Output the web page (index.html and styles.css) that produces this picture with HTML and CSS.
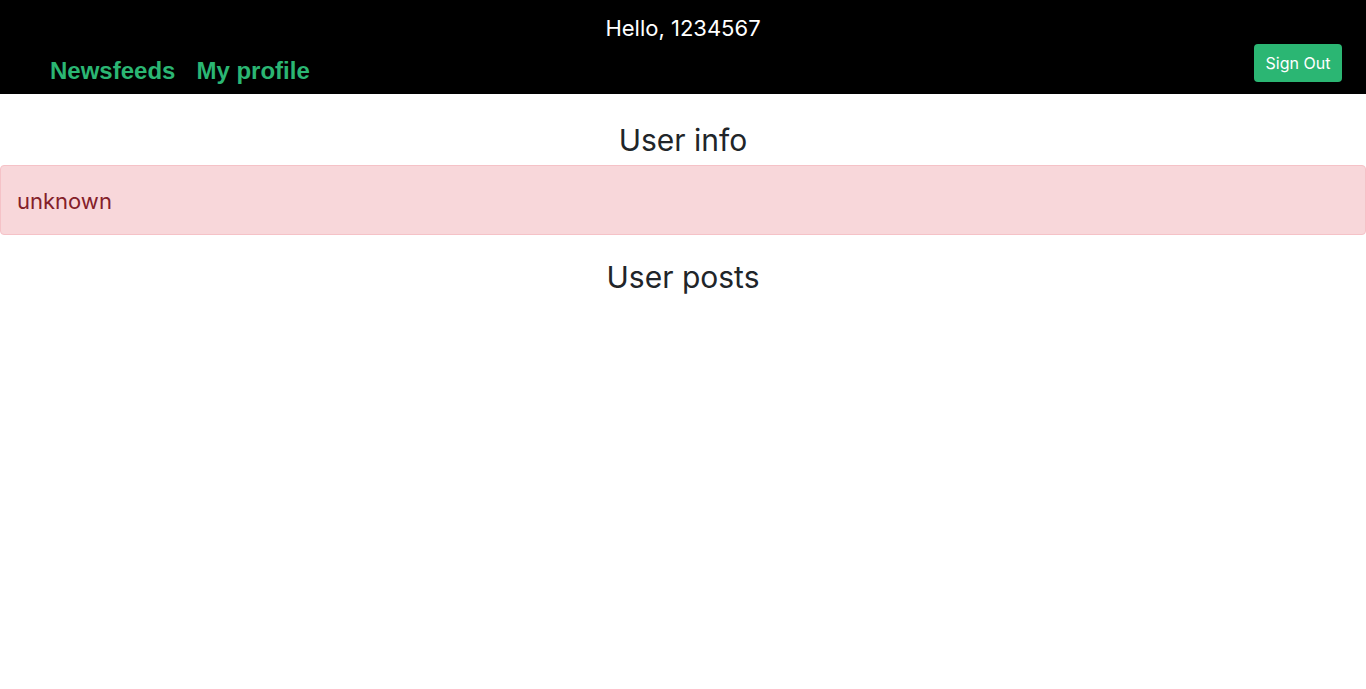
FILE: index.html
```html
<!DOCTYPE html>
<html>
<head>
<meta charset="utf-8">
<link rel="stylesheet" href="styles.css">
</head>
<body>
<header class="topbar">
  <div class="greeting">Hello, 1234567</div>
  <div class="navrow">
    <nav class="links">
      <a href="#" class="link">Newsfeeds</a>
      <a href="#" class="link">My profile</a>
    </nav>
    <button class="btn-signout">Sign Out</button>
  </div>
</header>
<main class="content">
  <h2 class="title title-info">User info</h2>
  <div class="alert">unknown</div>
  <h2 class="title">User posts</h2>
</main>
</body>
</html>
```
FILE: styles.css
```css
* { box-sizing: border-box; }
body {
  margin: 0;
  font-family: Inter, "Noto Sans", sans-serif;
  color: #212529;
  background: #fff;
}
.topbar {
  background: #000;
  height: 94px;
  padding-top: 14px;
}
.greeting {
  color: #fff;
  text-align: center;
  font-size: 22px;
  line-height: 28px;
}
.navrow {
  display: flex;
  justify-content: space-between;
  align-items: flex-end;
  padding: 0 24px 0 50px;
  margin-top: 2px;
}
.links {
  display: flex;
  gap: 21px;
  margin-bottom: -3px;
}
.link {
  font-family: "Liberation Sans", Arial, sans-serif;
  font-weight: bold;
  font-size: 24px;
  line-height: 32px;
  color: #2bb673;
  text-decoration: none;
}
.btn-signout {
  background: #2bb673;
  color: #fff;
  border: none;
  border-radius: 4px;
  font-family: Inter, sans-serif;
  font-size: 16px;
  height: 38px;
  width: 88px;
  padding: 0;
  margin-bottom: 2px;
}
.content {
  display: flex;
  flex-direction: column;
}
.title {
  text-align: center;
  font-size: 30px;
  font-weight: 400;
  line-height: 36px;
  margin: 0;
}
.title-info { margin-top: 28px; margin-bottom: 7px; }
.alert {
  background: #f8d7da;
  border: 1px solid #f5c2c7;
  color: #842029;
  border-radius: 4px;
  padding: 19px 16px 17px;
  font-size: 22px;
  line-height: 32px;
  margin-bottom: 24px;
}
```
